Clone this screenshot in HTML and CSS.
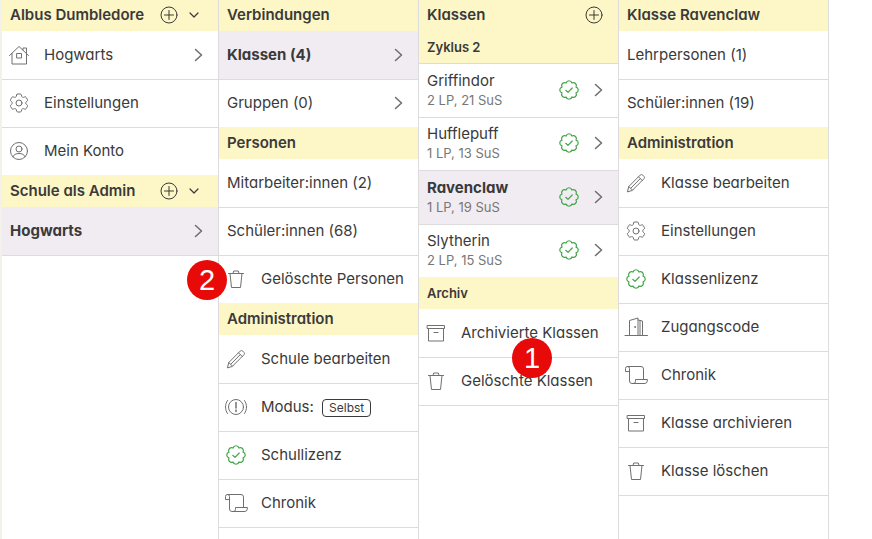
FILE: index.html
```html
<!DOCTYPE html>
<html lang="de">
<head>
    <meta charset="utf-8">
    <title>Klasse Ravenclaw</title>
    <link rel="stylesheet" href="styles.css">
</head>

<body>
<svg class="sprite" aria-hidden="true">
    <symbol id="house" viewBox="0 0 24 24"><path d="M2.5 12.5 12 3.5l9.5 9M5 10.5V21h14.5V10.5M16 7V5h3.5v5M10 10.5h4.5V15H10z"/></symbol>
    <symbol id="gear" viewBox="0 0 24 24"><path d="M9.594 3.94c.09-.542.56-.94 1.11-.94h2.593c.55 0 1.02.398 1.11.94l.213 1.281c.063.374.313.686.645.87.074.04.147.083.22.127.325.196.72.257 1.075.124l1.217-.456a1.125 1.125 0 0 1 1.37.49l1.296 2.247a1.125 1.125 0 0 1-.26 1.431l-1.003.827c-.293.241-.438.613-.43.992a7.723 7.723 0 0 1 0 .255c-.008.378.137.75.43.991l1.004.827c.424.35.534.955.26 1.43l-1.298 2.247a1.125 1.125 0 0 1-1.369.491l-1.217-.456c-.355-.133-.75-.072-1.076.124a6.47 6.47 0 0 1-.22.128c-.331.183-.581.495-.644.869l-.213 1.281c-.09.543-.56.94-1.11.94h-2.594c-.55 0-1.019-.398-1.11-.94l-.213-1.281c-.062-.374-.312-.686-.644-.87a6.52 6.52 0 0 1-.22-.127c-.325-.196-.72-.257-1.076-.124l-1.217.456a1.125 1.125 0 0 1-1.369-.49l-1.297-2.247a1.125 1.125 0 0 1 .26-1.431l1.004-.827c.292-.24.437-.613.43-.991a6.932 6.932 0 0 1 0-.255c.007-.38-.138-.751-.43-.992l-1.004-.827a1.125 1.125 0 0 1-.26-1.43l1.297-2.247a1.125 1.125 0 0 1 1.37-.491l1.216.456c.356.133.751.072 1.076-.124.072-.044.146-.086.22-.128.332-.183.582-.495.644-.869l.214-1.28Z"/><circle cx="12" cy="12" r="3"/></symbol>
    <symbol id="user" viewBox="0 0 24 24"><circle cx="12" cy="12" r="8.5"/><circle cx="12" cy="10" r="3"/><path d="M5.8 17.8c1-2.300 3.200-3.300 6.200-3.300s5.200 1 6.200 3.300"/></symbol>
    <symbol id="trash" viewBox="0 0 24 24"><path d="M4.500 6.500h15M9 6.500l.7-2.500h4.600l.7 2.500M6 6.500 7.500 20.500h9L18 6.500"/></symbol>
    <symbol id="pencil" viewBox="0 0 24 24"><path d="m3.500 20.500 1.300-5L16.200 4.100c.7-.7 1.800-.7 2.500 0l1.200 1.200c.7.7.7 1.800 0 2.500L8.500 19.200zM4.800 15.500l3.700 3.700M14.500 5.800l3.700 3.700M16.300 7.600 6.700 17.300"/></symbol>
    <symbol id="mode" viewBox="0 0 24 24"><circle cx="12" cy="12" r="7.500"/><path d="M3.500 5.500c-2.700 4-2.700 9 0 13M20.500 5.500c2.700 4 2.700 9 0 13"/><path d="M12 7.500v5.500M12 15v1.500" stroke-width="1.500"/></symbol>
    <symbol id="badge" viewBox="0 0 24 24"><path d="M9.1 5A3 3 0 0 1 14.9 5 3 3 0 0 1 19 9.1 3 3 0 0 1 19 14.9 3 3 0 0 1 14.9 19 3 3 0 0 1 9.1 19 3 3 0 0 1 5 14.9 3 3 0 0 1 5 9.1 3 3 0 0 1 9.1 5zM8.800 12.300l2.200 2.100 4.200-4.400"/></symbol>
    <symbol id="scroll" viewBox="0 0 24 24"><path d="M3.500 3.500h13.500q2.500 0 2.500 2.500v10.500M5.500 8.500h-4V5.500q0-2 2-2t2 2V18q0 2.500 2.500 2.500h13q2.500 0 2.500-4H11.500v2q0 2-2 2"/></symbol>
    <symbol id="door" viewBox="0 0 24 24"><path d="M1 20.500h22.500M5.500 20.500V5.500l8.500-2.500v17.500M14 5l4.500 1v14.500M16 5.500v15"/><circle cx="11" cy="12" r=".5"/></symbol>
    <symbol id="archive" viewBox="0 0 24 24"><path d="M3.500 4.500h17v3h-17zM4.500 7.500v12.500h15V7.500M10 11.500h4"/></symbol>
    <symbol id="right" viewBox="0 0 16 16"><path d="m5.500 2.500 6 5.500-6 5.500"/></symbol>
    <symbol id="down" viewBox="0 0 16 16"><path d="m4 6 4 4 4-4"/></symbol>
    <symbol id="plus" viewBox="0 0 20 20"><circle cx="10" cy="10" r="8"/><path d="M10 5.500v9M5.500 10h9"/></symbol>
</svg>

<main class="columns">
    <section class="column">
        <div class="head">
            <h2>Albus Dumbledore</h2>
            <button type="button" aria-label="Hinzufügen"><svg class="plus"><use href="#plus"/></svg></button>
            <button type="button" aria-label="Einklappen"><svg class="arrow"><use href="#down"/></svg></button>
        </div>
        <ul class="list">
            <li><a class="with-icon" href="#"><svg class="icon"><use href="#house"/></svg><span class="label">Hogwarts</span><svg class="arrow"><use href="#right"/></svg></a></li>
            <li><a class="with-icon" href="#"><svg class="icon"><use href="#gear"/></svg><span class="label">Einstellungen</span></a></li>
            <li><a class="with-icon" href="#"><svg class="icon"><use href="#user"/></svg><span class="label">Mein Konto</span></a></li>
        </ul>
        <div class="head">
            <h2>Schule als Admin</h2>
            <button type="button" aria-label="Hinzufügen"><svg class="plus"><use href="#plus"/></svg></button>
            <button type="button" aria-label="Einklappen"><svg class="arrow"><use href="#down"/></svg></button>
        </div>
        <ul class="list">
            <li class="active"><a href="#"><span class="label">Hogwarts</span><svg class="arrow"><use href="#right"/></svg></a></li>
        </ul>
    </section>

    <section class="column">
        <div class="head"><h2>Verbindungen</h2></div>
        <ul class="list">
            <li class="active"><a href="#"><span class="label">Klassen (4)</span><svg class="arrow"><use href="#right"/></svg></a></li>
            <li><a href="#"><span class="label">Gruppen (0)</span><svg class="arrow"><use href="#right"/></svg></a></li>
        </ul>
        <div class="head"><h2>Personen</h2></div>
        <ul class="list">
            <li><a href="#"><span class="label">Mitarbeiter:innen (2)</span></a></li>
            <li><a href="#"><span class="label">Schüler:innen (68)</span></a></li>
            <li>
                <a class="with-icon" href="#"><svg class="icon"><use href="#trash"/></svg><span class="label">Gelöschte Personen</span></a>
                <span class="marker marker-left">2</span>
            </li>
        </ul>
        <div class="head"><h2>Administration</h2></div>
        <ul class="list">
            <li><a class="with-icon" href="#"><svg class="icon"><use href="#pencil"/></svg><span class="label">Schule bearbeiten</span></a></li>
            <li><a class="with-icon" href="#"><svg class="icon"><use href="#mode"/></svg><span class="label">Modus: <span class="tag">Selbst</span></span></a></li>
            <li><a class="with-icon" href="#"><svg class="icon green"><use href="#badge"/></svg><span class="label">Schullizenz</span></a></li>
            <li><a class="with-icon" href="#"><svg class="icon"><use href="#scroll"/></svg><span class="label">Chronik</span></a></li>
        </ul>
    </section>

    <section class="column">
        <div class="head">
            <h2>Klassen</h2>
            <button type="button" aria-label="Klasse hinzufügen"><svg class="plus"><use href="#plus"/></svg></button>
        </div>
        <div class="head"><h3>Zyklus 2</h3></div>
        <ul class="list classes">
            <li><a href="#"><span class="label">Griffindor<small>2 LP, 21 SuS</small></span><svg class="icon green"><use href="#badge"/></svg><svg class="arrow"><use href="#right"/></svg></a></li>
            <li><a href="#"><span class="label">Hufflepuff<small>1 LP, 13 SuS</small></span><svg class="icon green"><use href="#badge"/></svg><svg class="arrow"><use href="#right"/></svg></a></li>
            <li class="active"><a href="#"><span class="label">Ravenclaw<small>1 LP, 19 SuS</small></span><svg class="icon green"><use href="#badge"/></svg><svg class="arrow"><use href="#right"/></svg></a></li>
            <li><a href="#"><span class="label">Slytherin<small>2 LP, 15 SuS</small></span><svg class="icon green"><use href="#badge"/></svg><svg class="arrow"><use href="#right"/></svg></a></li>
        </ul>
        <div class="head"><h3>Archiv</h3></div>
        <ul class="list">
            <li>
                <a class="with-icon" href="#"><svg class="icon"><use href="#archive"/></svg><span class="label">Archivierte Klassen</span></a>
                <span class="marker marker-below">1</span>
            </li>
            <li><a class="with-icon" href="#"><svg class="icon"><use href="#trash"/></svg><span class="label">Gelöschte Klassen</span></a></li>
        </ul>
    </section>

    <section class="column">
        <div class="head"><h2>Klasse Ravenclaw</h2></div>
        <ul class="list">
            <li><a href="#"><span class="label">Lehrpersonen (1)</span></a></li>
            <li><a href="#"><span class="label">Schüler:innen (19)</span></a></li>
        </ul>
        <div class="head"><h2>Administration</h2></div>
        <ul class="list">
            <li><a class="with-icon" href="#"><svg class="icon"><use href="#pencil"/></svg><span class="label">Klasse bearbeiten</span></a></li>
            <li><a class="with-icon" href="#"><svg class="icon"><use href="#gear"/></svg><span class="label">Einstellungen</span></a></li>
            <li><a class="with-icon" href="#"><svg class="icon green"><use href="#badge"/></svg><span class="label">Klassenlizenz</span></a></li>
            <li><a class="with-icon" href="#"><svg class="icon"><use href="#door"/></svg><span class="label">Zugangscode</span></a></li>
            <li><a class="with-icon" href="#"><svg class="icon"><use href="#scroll"/></svg><span class="label">Chronik</span></a></li>
            <li><a class="with-icon" href="#"><svg class="icon"><use href="#archive"/></svg><span class="label">Klasse archivieren</span></a></li>
            <li><a class="with-icon" href="#"><svg class="icon"><use href="#trash"/></svg><span class="label">Klasse löschen</span></a></li>
        </ul>
    </section>
</main>
</body>
</html>
```
FILE: styles.css
```css
*{ padding:0; margin:0; box-sizing:border-box; }
body{ font-family:Inter, "Liberation Sans", sans-serif; font-size:15px; line-height:20px; font-feature-settings:"cv11"; color:#3a3a3a; background:#fff; }
.sprite{ display:none; }

.columns{ display:grid; grid-template-columns:217fr 200fr 200fr 210fr 43fr; min-height:100vh; border-left:2px solid #f3f2ea; }
.column{ border-right:1px solid #dcdcdc; min-width:0; }

/* yellow headings */
.head{ display:flex; align-items:center; min-height:32px; padding:0 14px 1px 8px; background:#fdf6c6; }
.head:first-child{ min-height:31px; }
.head h2{ flex:1; font-size:15px; font-weight:600; white-space:nowrap; }
.head h3{ flex:1; font-size:13px; font-weight:600; }
.head button{ display:flex; border:0; background:none; color:#3a3a3a; cursor:pointer; }
.head button + button{ margin:0 2px 0 7px; }

/* rows */
.list{ list-style:none; }
.list li{ position:relative; border-top:1px solid #dcdcdc; }
.list li:first-child{ border-top-color:transparent; }
.list:last-child{ border-bottom:1px solid #dcdcdc; }
.list a{ display:flex; align-items:center; min-height:47px; padding:0 12px 1px 8px; color:inherit; text-decoration:none; }
.list a.with-icon{ padding-left:5px; }
.with-icon .label{ margin-left:13px; }
.label{ flex:1; white-space:nowrap; }
.active{ background:#f1ecf2; }
.active .label{ font-weight:700; }

/* classes with a second line */
.classes{ display:grid; grid-auto-rows:1fr; min-height:214px; }
.classes li:first-child{ border-top-color:#dcdcdc; }
.classes a{ height:100%; }
.classes .arrow{ margin-left:9px; }
.classes small{ display:block; font-size:13px; line-height:18px; font-weight:400; color:#777; }

.tag{ display:inline-block; margin-left:4px; padding:0 6px; border:1px solid #3a3a3a; border-radius:4px; font-size:12px; line-height:16px; }

svg{ flex:none; fill:none; stroke:currentColor; stroke-linecap:round; stroke-linejoin:round; }
.icon{ width:24px; height:24px; color:#707070; }
.icon.green{ color:#43a548; stroke-width:1.2; }
.plus{ width:20px; height:20px; }
.arrow{ width:16px; height:16px; stroke-width:1.2; }
.list .arrow{ color:#707070; stroke-width:1.6; }

/* numbered markers over the rows */
.marker{ position:absolute; z-index:1; width:40px; height:40px; border-radius:50%; background:#e80909; color:#fff; font-family:"Liberation Sans", sans-serif; font-size:29px; line-height:40px; text-align:center; }
.marker-left{ left:-32px; top:4px; }
.marker-below{ left:93px; top:28px; }
```
